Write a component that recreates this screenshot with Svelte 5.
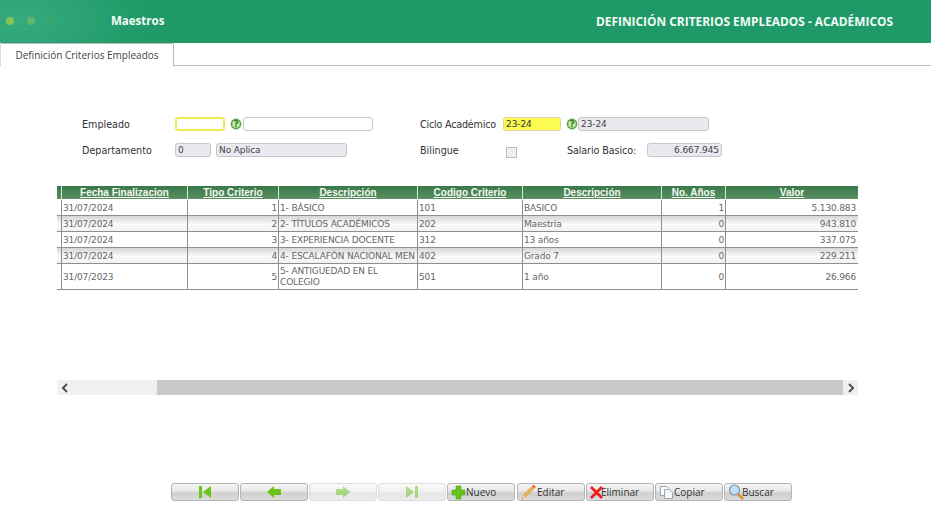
<script>
  const cols = [
    { t: 'Fecha Finalizacion', w: 126 },
    { t: 'Tipo Criterio', w: 91 },
    { t: 'Descripción', w: 139 },
    { t: 'Codigo Criterio', w: 105 },
    { t: 'Descripción', w: 139 },
    { t: 'No. Años', w: 64 },
    { t: 'Valor', w: 132 }
  ];
  const rows = [
    ['31/07/2024', '1', '1- BÁSICO', '101', 'BASICO', '1', '5.130.883'],
    ['31/07/2024', '2', '2- TÍTULOS ACADÉMICOS', '202', 'Maestría', '0', '943.810'],
    ['31/07/2024', '3', '3- EXPERIENCIA DOCENTE', '312', '13 años', '0', '337.075'],
    ['31/07/2024', '4', '4- ESCALAFÓN NACIONAL MEN', '402', 'Grado 7', '0', '229.211'],
    ['31/07/2023', '5', '5- ANTIGUEDAD EN EL COLEGIO', '501', '1 año', '0', '26.966']
  ];
  const right = [false, true, false, false, false, true, true];
</script>

<div class="page">
  <header class="top">
    <div class="dots"><i class="d1"></i><i class="d2"></i><i class="d3"></i></div>
    <span class="module">Maestros</span>
    <span class="title">DEFINICIÓN CRITERIOS EMPLEADOS - ACADÉMICOS</span>
  </header>

  <nav class="tabs"><div class="tab">Definición Criterios Empleados</div></nav>

  <section class="form">
    <div class="frow r1">
      <label class="l1">Empleado</label>
      <div class="inp yellow w50"></div>
      <svg class="help first" viewBox="0 0 12 12"><circle cx="6" cy="6" r="5.4" fill="#5fa648"/><circle cx="6" cy="6" r="3.8" fill="#c4e6ac"/><text x="6" y="9" text-anchor="middle" class="q">?</text></svg>
      <div class="inp white w130"></div>
      <label class="l2">Ciclo Académico</label>
      <div class="inp yellowfill w58">23-24</div>
      <svg class="help" viewBox="0 0 12 12"><circle cx="6" cy="6" r="5.4" fill="#5fa648"/><circle cx="6" cy="6" r="3.8" fill="#c4e6ac"/><text x="6" y="9" text-anchor="middle" class="q">?</text></svg>
      <div class="inp grey w130b">23-24</div>
    </div>
    <div class="frow r2">
      <label class="l1">Departamento</label>
      <div class="inp grey w36">0</div>
      <div class="inp grey w131">No Aplica</div>
      <label class="l2b">Bilingue</label>
      <span class="check"></span>
      <label class="l3">Salario Basico:</label>
      <div class="inp grey w75 num">6.667.945</div>
    </div>
  </section>

  <section class="grid-wrap">
    <div class="thead">
      <span class="stub"></span>
      {#each cols as c}
        <span class="th" style="width:{c.w}px">{c.t}</span>
      {/each}
    </div>
    {#each rows as r, i}
      <div class="tr" class:alt={i % 2 === 1} class:tall={i === 4}>
        <span class="stub2"></span>
        {#each r as v, j}
          <span class="td" class:right={right[j]} style="width:{cols[j].w}px">{v}</span>
        {/each}
      </div>
    {/each}
  </section>

  <div class="scroll">
    <span class="arrow"><svg viewBox="0 0 8 10" width="8" height="10"><path d="M6 1 2 5l4 4" fill="none" stroke="#505050" stroke-width="2"/></svg></span>
    <span class="thumb"></span>
    <span class="arrow"><svg viewBox="0 0 8 10" width="8" height="10"><path d="M2 1l4 4-4 4" fill="none" stroke="#505050" stroke-width="2"/></svg></span>
  </div>

  <footer class="bar">
    <button class="btn">
      <svg viewBox="0 0 16 14" width="16" height="14"><rect x="2" y="1" width="3" height="12" fill="#6cc417"/><path d="M14 1v12L6 7z" fill="#6cc417"/></svg>
    </button>
    <button class="btn">
      <svg viewBox="0 0 16 14" width="16" height="14"><path d="M1 7l7-6v3h7v6H8v3z" fill="#6cc417"/></svg>
    </button>
    <button class="btn off">
      <svg viewBox="0 0 16 14" width="16" height="14"><path d="M15 7L8 1v3H1v6h7v3z" fill="#6cc417"/></svg>
    </button>
    <button class="btn off">
      <svg viewBox="0 0 16 14" width="16" height="14"><path d="M2 1v12l8-6z" fill="#6cc417"/><rect x="11" y="1" width="3" height="12" fill="#6cc417"/></svg>
    </button>
    <button class="btn txt plus">
      <svg viewBox="0 0 15 15" width="15" height="15"><path d="M5 1h5v4h4v5h-4v4H5v-4H1V5h4z" fill="#68c31d" stroke="#4f9e12" stroke-width=".6"/></svg><span>Nuevo</span>
    </button>
    <button class="btn txt ed">
      <svg viewBox="0 0 16 16" width="16" height="16"><path d="M1 15.500l1.500-4.500L12.500 1l2 2-10 10z" fill="#f2b544" stroke="#c08a30" stroke-width=".6"/><path d="M1 15.500l1.500-4.500 2 2z" fill="#e9d3a8"/><path d="M12.500 1l2 2-1.200 1.200-2-2z" fill="#e2574c"/></svg><span>Editar</span>
    </button>
    <button class="btn txt el">
      <svg class="tight" viewBox="0 0 13 13" width="13" height="13"><path d="M1 1l11 11M12 1L1 12" stroke="#f01818" stroke-width="2.600"/></svg><span>Eliminar</span>
    </button>
    <button class="btn txt co">
      <svg viewBox="0 0 15 15" width="15" height="15"><path d="M1.500 1.500h6l2 2v7h-8z" fill="#fff" stroke="#9aa4ad"/><path d="M5.500 4.500h5l3 3v6h-8z" fill="#f4f7fa" stroke="#9aa4ad"/></svg><span>Copiar</span>
    </button>
    <button class="btn txt bu">
      <svg class="tight" viewBox="0 0 16 16" width="16" height="16"><circle cx="6.500" cy="6" r="5" fill="#bfe0fa" stroke="#7d97ad" stroke-width="1.200"/><path d="M10 10l5 5" stroke="#d9942f" stroke-width="2.600"/></svg><span>Buscar</span>
    </button>
  </footer>
</div>

<style>
  :global(body) { margin: 0; background: #fff; }
  .page { width: 931px; height: 523px; overflow: hidden; font-family: "DejaVu Sans", sans-serif; color: #333; position: relative; }

  .top { height: 43px; background: radial-gradient(ellipse 130px 70px at 20px 20px, #35ab7e 0%, #1f9968 100%); background-color: #1f9968; display: flex; align-items: center; color: #f2fbf6; font-family: "Open Sans", sans-serif; font-weight: 700; box-sizing: border-box; padding-bottom: 3px; }
  .dots { display: flex; gap: 13px; width: 111px; padding: 2px 0 0 6px; box-sizing: border-box; }
  .dots i { width: 8px; height: 8px; border-radius: 50%; display: block; }
  .d1 { background: #86c552; }
  .d2 { background: #62b764; }
  .d3 { background: #36a56f; }
  .module { font-size: 11.500px; }
  .title { font-size: 11.900px; margin: 2px 38px 0 auto; }

  .tabs { height: 23px; border-bottom: 1px solid #b9b9b9; box-sizing: border-box; }
  .tab { width: 174px; height: 23px; box-sizing: border-box; background: #fff; border: 1px solid #b9b9b9; border-bottom: none; border-left-color: #ddd; border-radius: 2px 2px 0 0; font-family: "Open Sans", sans-serif; font-size: 10px; color: #444; text-align: center; line-height: 22px; }

  .form { height: 120px; padding-top: 51px; box-sizing: border-box; font-size: 10px; }
  .frow { display: flex; align-items: center; height: 14px; }
  .r2 { margin-top: 12px; }
  .frow label { color: #333; font-size: 9.600px; }
  .l1 { width: 93px; margin-left: 82px; }
  .l2 { width: 83px; margin-left: 47px; letter-spacing: -.2px; }
  .l2b { width: 86px; margin-left: 73px; }
  .l3 { width: 80px; margin-left: 50px; letter-spacing: -.1px; }
  .inp { height: 14px; box-sizing: border-box; border: 1px solid #c4c6cc; border-radius: 3px; font-size: 9px; letter-spacing: -.1px; line-height: 12px; padding: 0 2px; color: #444; white-space: nowrap; }
  .yellow { background: #fff; border: 2px solid #f2ec4f; }
  .yellowfill { background: #fbfb52; border-color: #d8d8a0; color: #333; }
  .white { background: #fff; }
  .grey { background: #e9e9ef; }
  .w50 { width: 50px; }
  .w130 { width: 130px; }
  .w58 { width: 58px; }
  .w130b { width: 131px; }
  .w36 { width: 36px; margin-right: 5px; }
  .w131 { width: 131px; }
  .w75 { width: 75px; }
  .num { text-align: right; }
  .help { width: 12px; height: 12px; margin: 0 0 0 5px; flex: none; }
  .help.first { margin-right: 1px; }
  .q { font-size: 9px; font-weight: 700; fill: #2f7d20; }
  .check { width: 11px; height: 11px; border: 1px solid #bbb; background: #efefef; box-sizing: border-box; margin-top: 4px; flex: none; }

  .grid-wrap { margin-left: 57px; width: 801px; font-size: 9px; letter-spacing: -.15px; color: #666; }
  .thead { display: flex; height: 13px; background: linear-gradient(#39794a, #5a8f62); border-bottom: 1px solid #fff; }
  .stub { width: 5px; border-right: 1px solid #d8e6da; box-sizing: border-box; }
  .th { box-sizing: border-box; text-align: center; color: #f4f8f2; font-family: "Liberation Sans", sans-serif; font-weight: 700; letter-spacing: 0; text-decoration: underline; font-size: 10px; line-height: 14px; border-right: 1px solid #d8e6da; white-space: nowrap; }
  .th:last-child { border-right: none; }
  .tr { display: flex; height: 16px; box-sizing: border-box; border-bottom: 1px solid #8f8f8f; background: #fff; }
  .tr.alt { background: linear-gradient(#d6d6d6, #fafafa 55%, #f2f2f2); }
  .tr.tall { height: 26px; }
  .stub2 { width: 5px; border-right: 1px solid #8f8f8f; box-sizing: border-box; }
  .td { box-sizing: border-box; border-right: 1px solid #8f8f8f; padding: 1px 1px 0 1px; display: flex; align-items: center; line-height: 11px; overflow: hidden; }
  .td:last-child { border-right: none; padding-right: 2px; }
  .td.right { justify-content: flex-end; text-align: right; }

  .scroll { position: absolute; left: 57px; top: 380px; width: 801px; height: 15px; background: #f0f0f0; display: flex; }
  .arrow { width: 15px; height: 15px; display: flex; align-items: center; justify-content: center; }
  .thumb { margin-left: 85px; flex: 1; background: #c9c9c9; }

  .bar { position: absolute; left: 171px; top: 483px; display: flex; gap: 1px; }
  .btn { width: 68px; height: 18px; padding: 0; box-sizing: border-box; border: 1px solid #b4b4b4; border-radius: 3px; background: linear-gradient(#f6f6f6, #e6e6e6 45%, #cfcfcf 55%, #dcdcdc); display: flex; align-items: center; justify-content: center; font-family: "Open Sans", sans-serif; font-size: 10px; color: #333; }
  .btn.off { border-color: #ddd; background: linear-gradient(#fafafa, #f1f1f1 45%, #e6e6e6 55%, #ececec); }
  .btn.off svg { opacity: .5; }
  .btn.txt { justify-content: flex-start; padding-left: 3px; }
  .btn.plus { margin-right: 1px; }
  .tight { margin-right: -2px; }
</style>
